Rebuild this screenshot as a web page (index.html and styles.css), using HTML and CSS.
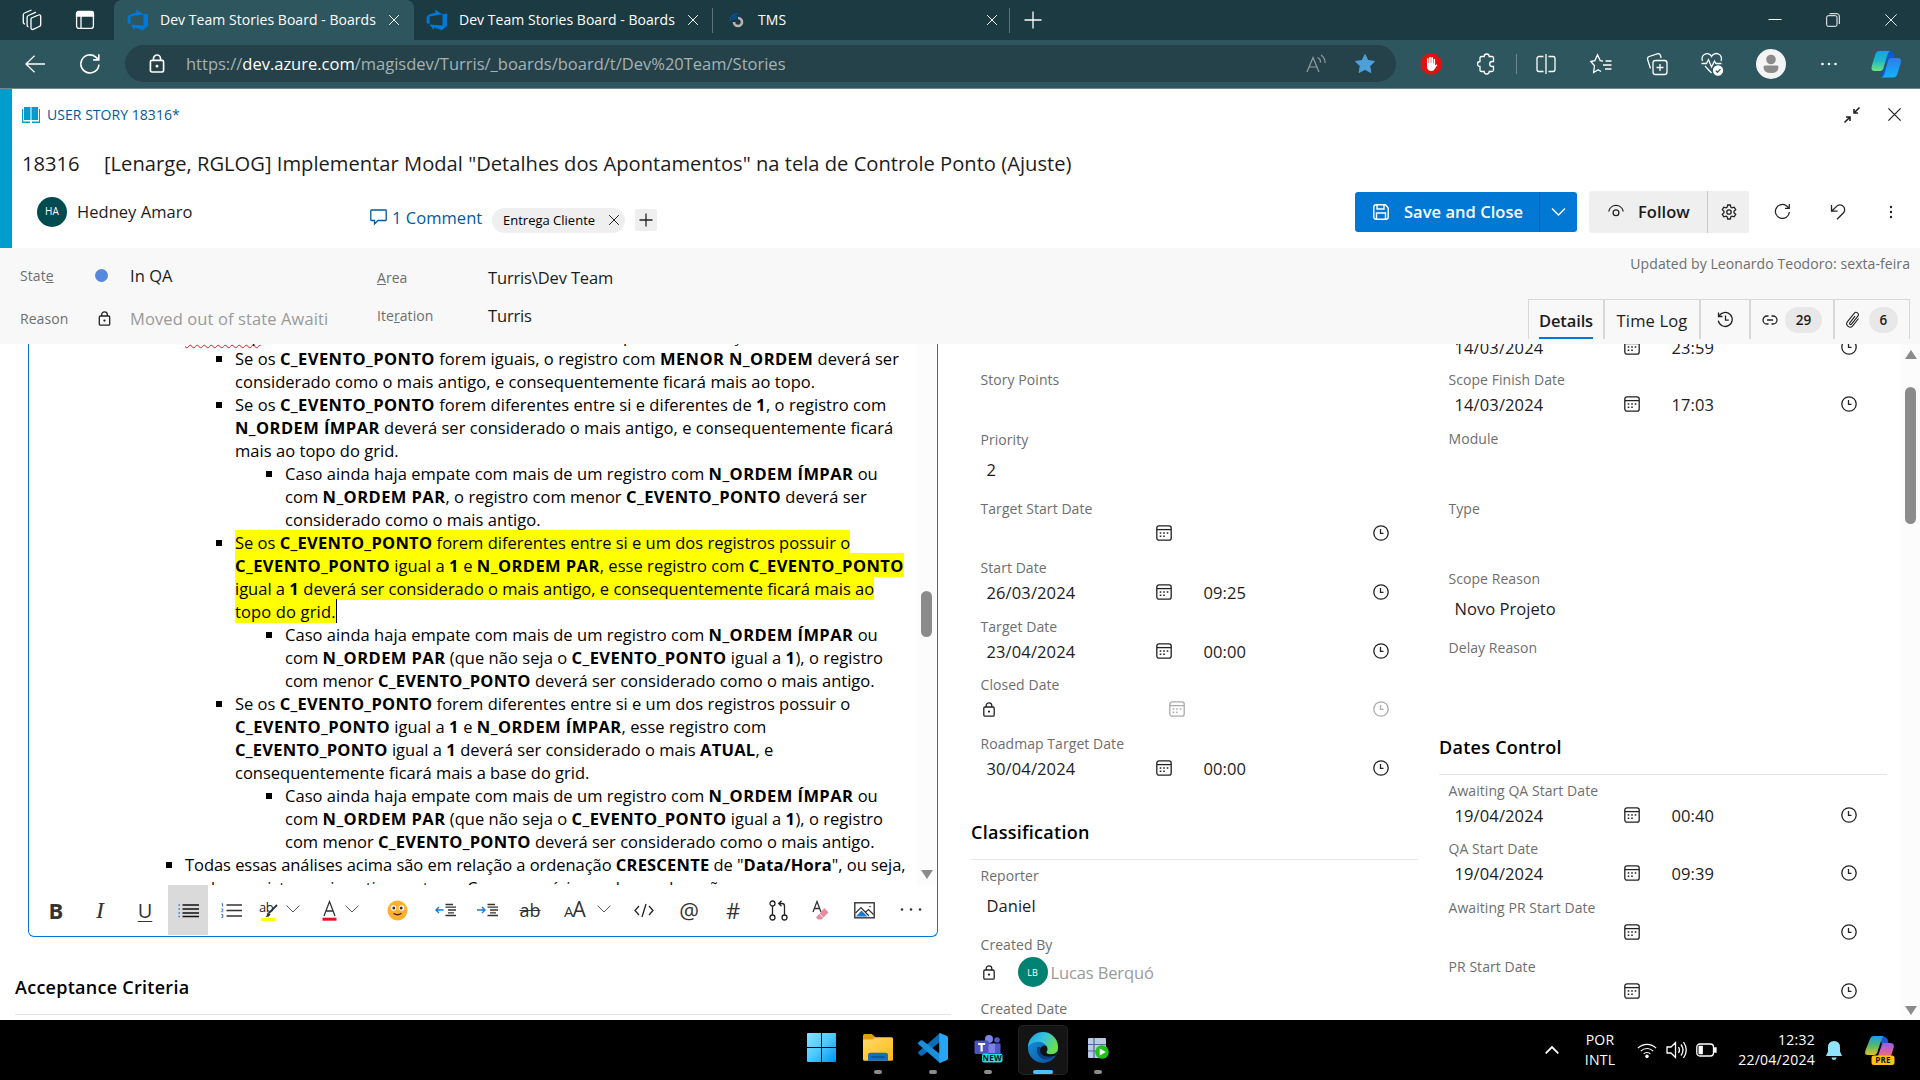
FILE: index.html
```html
<!DOCTYPE html>
<html lang="pt-BR">
<head>
<meta charset="utf-8">
<title>Dev Team Stories Board - Boards</title>
<link rel="stylesheet" href="styles.css">
</head>
<body>
<svg class="defs" aria-hidden="true">
  <defs>
    <linearGradient id="gWin" x1="0" y1="0" x2="1" y2="1"><stop offset="0" stop-color="#8be0ff"/><stop offset=".5" stop-color="#4cc9fb"/><stop offset="1" stop-color="#0092f5"/></linearGradient>
    <linearGradient id="gFolder" x1="0" y1="0" x2="1" y2="1"><stop offset="0" stop-color="#ffdc6b"/><stop offset="1" stop-color="#fdb813"/></linearGradient>
    <linearGradient id="gEdgeTop" x1="0" y1="0" x2="1" y2=".5"><stop offset="0" stop-color="#1c9fe0"/><stop offset=".5" stop-color="#35c1df"/><stop offset="1" stop-color="#6bdf4c"/></linearGradient>
    <linearGradient id="gEdgeBot" x1="0" y1="0" x2="1" y2="1"><stop offset="0" stop-color="#1597e2"/><stop offset="1" stop-color="#0c4a94"/></linearGradient>
    <linearGradient id="gCopA" x1="0" y1="0" x2="0" y2="1"><stop offset="0" stop-color="#0fa5e8"/><stop offset=".5" stop-color="#22b8c4"/><stop offset="1" stop-color="#6fe57c"/></linearGradient>
    <linearGradient id="gCopB" x1="0" y1="0" x2="0" y2="1"><stop offset="0" stop-color="#2f7be8"/><stop offset="1" stop-color="#10b4ff"/></linearGradient>
    <linearGradient id="gPreA" x1="0" y1="0" x2="0" y2="1"><stop offset="0" stop-color="#1e9bf0"/><stop offset=".5" stop-color="#52b96f"/><stop offset="1" stop-color="#e6c11e"/></linearGradient>
    <linearGradient id="gPreB" x1="0" y1="0" x2="0" y2="1"><stop offset="0" stop-color="#9a5cf0"/><stop offset="1" stop-color="#f5677c"/></linearGradient>
    <symbol id="close" viewBox="0 0 16 16"><path d="M1.5 1.5l13 13M14.5 1.5l-13 13"/></symbol>
    <symbol id="azure" viewBox="0 0 22 22"><path fill="#0078d7" d="M21 4.5v12.6l-5.1 4.2-8-2.9v2.9l-4.5-5.9 13.1 1V5.2zM16.6 5.2L9.2 .8v2.9L2.4 5.7.7 8v6l2.9 1.3V7.5z"/></symbol>
    <symbol id="cal" viewBox="0 0 16 16"><rect x=".8" y=".8" width="14.4" height="14.4" rx="2.2"/><path d="M1 4.6h14"/><path stroke-width="1.6" d="M3.700 8h1.600M7.200 8h1.600M10.700 8h1.600M3.700 11.200h1.600M7.200 11.200h1.600"/></symbol>
    <symbol id="clock" viewBox="0 0 16 16"><circle cx="8" cy="8" r="7.2"/><path d="M7.5 4v4.4h3"/></symbol>
    <symbol id="lock" viewBox="0 0 12 15"><rect x=".8" y="5" width="10.4" height="9.2" rx="1.2"/><path d="M3.2 5V3.6a2.8 2.8 0 0 1 5.6 0V5"/><circle cx="6" cy="9.6" r=".5"/></symbol>
    <symbol id="chev" viewBox="0 0 14 8"><path d="M.5 .6L7 7 13.5 .6"/></symbol>
    <symbol id="refresh" viewBox="0 0 18 18"><path d="M16.3 9.5A7.4 7.4 0 1 1 13.8 3.4L16 5.4M16.2 1v4.6h-4.6"/></symbol>
  </defs>
</svg>

<header class="browser">
  <div class="tabstrip">
    <div class="corner">
      <svg class="ln" width="22" height="22" viewBox="0 0 22 22"><path d="M10.500 9l7-3a1.500 1.500 0 0 1 2.200 1.500v8a2 2 0 0 1-1.500 2l-6 2.800a1.500 1.500 0 0 1-2.200-1.500V10.500q0-1 .5-1.500z"/><path d="M7.500 17.800a1.500 1.500 0 0 1-1.400-1.500V8.500a2 2 0 0 1 1.300-2l7.600-3.300M4 14.800a1.500 1.500 0 0 1-1.700-1.500V6a2 2 0 0 1 1.300-2L10.500 1"/></svg>
      <svg class="ln" width="20" height="20" viewBox="0 0 20 20"><rect x="1.600" y="1.600" width="16.800" height="16.800" rx="2.500"/><path fill="#fff" d="M1.500 6V3.500a2 2 0 0 1 2-2h13a2 2 0 0 1 2 2V6z"/><path d="M6 6v12"/></svg>
    </div>
    <div class="tab active"><svg width="22" height="22"><use href="#azure"/></svg><span>Dev Team Stories Board - Boards</span><svg class="ln x" width="12" height="12"><use href="#close"/></svg></div>
    <div class="tab"><svg width="22" height="22"><use href="#azure"/></svg><span>Dev Team Stories Board - Boards</span><svg class="ln x" width="12" height="12"><use href="#close"/></svg></div>
    <div class="tab tms"><svg width="14" height="14" viewBox="0 0 14 14"><path d="M1 8A7 7 0 0 1 8 1M4 7a4 4 0 0 1 4-3" fill="none" stroke="#0d4f94" stroke-width="1.800"/><path d="M5 9a4 4 0 1 0 4-4" fill="none" stroke="#b9b4b4" stroke-width="2.600"/></svg><span>TMS</span><svg class="ln x" width="12" height="12"><use href="#close"/></svg></div>
    <svg class="ln newtab" width="18" height="18" viewBox="0 0 18 18"><path d="M9 .5v17M.5 9h17"/></svg>
    <div class="winctl">
      <svg class="ln" width="14" height="14" viewBox="0 0 14 14"><path d="M.5 6.500h13"/></svg>
      <svg class="ln" width="14" height="14" viewBox="0 0 14 14"><rect x=".7" y="2.700" width="10.300" height="10.600" rx="1.500"/><path d="M3.500 .7H11a2.300 2.300 0 0 1 2.300 2.300v8"/></svg>
      <svg class="ln" width="14" height="14"><use href="#close"/></svg>
    </div>
  </div>
  <div class="navbar">
    <svg class="ln back" width="20" height="18" viewBox="0 0 20 18"><path d="M9.500 .7L1 9l8.500 8.300M1 9h19"/></svg>
    <svg class="ln" width="22" height="22"><use href="#refresh"/></svg>
    <div class="address">
      <svg class="ln" width="16" height="19"><use href="#lock"/></svg>
      <span class="url">https://<b>dev.azure.com</b>/magisdev/Turris/_boards/board/t/Dev%20Team/Stories</span>
      <svg class="aloud" width="20" height="20" viewBox="0 0 20 20"><path d="M1 18L7 3.500 13 18M3.200 13h7.600M11.500 3.500a5 5 0 0 1 3 5M15 1a9 9 0 0 1 4 8"/></svg>
      <svg width="22" height="22" viewBox="0 0 22 22"><path fill="#4f9fd8" stroke="#4f9fd8" stroke-linejoin="round" d="M11 1.500l2.900 6 6.600.9-4.800 4.600 1.200 6.500L11 16.400l-5.900 3.100 1.200-6.500L1.500 8.400l6.600-.9z"/></svg>
    </div>
    <div class="exts">
      <svg width="22" height="22" viewBox="0 0 22 22"><path fill="#e2100f" d="M6.500.8h9l5.700 5.700v9l-5.700 5.700h-9L.8 15.500v-9z"/><path fill="#fff" d="M7 8V5.500q1-.8 1.600 0V10h.5V4.300q.9-.9 1.700 0V10h.5V4.500q.9-.8 1.700 0V10.500h.5V6.200q.9-.7 1.600 0v6q1.400-1.300 2.300-.3-1.700 2.200-2.600 4.200-1 1.900-3.500 1.900-4 0-4.300-4z"/></svg>
      <svg class="ln" width="22" height="24" viewBox="0 0 22 24"><path d="M6.500 4.500h2.700a2.500 2.500 0 0 1 5 0H17q1.500 0 1.500 1.500v3.500h-1.300a2.500 2.500 0 0 0 0 5h1.300V18q0 1.500-1.500 1.500h-2.800a2.500 2.500 0 0 1-5 0H6.500Q5 19.500 5 18v-3.500a2.500 2.500 0 0 1 0-5V6q0-1.500 1.500-1.500z"/></svg>
      <i class="sep"></i>
      <svg class="ln" width="22" height="22" viewBox="0 0 22 22"><path d="M8.500 3.500H4a2 2 0 0 0-2 2v11a2 2 0 0 0 2 2h4.500M13.500 3.500H18a2 2 0 0 1 2 2v11a2 2 0 0 1-2 2h-4.500M11 1v20"/></svg>
      <svg class="ln" width="22" height="22" viewBox="0 0 22 22"><path d="M13 8l-2.800-.4L7.500 1.800 4.900 7.600.8 8.500l3.700 4.200-.9 6.800 4.600-2.800 2.800 1.800M15.500 8h6M13 12h8.500M15 16h6.500"/></svg>
      <svg class="ln" width="22" height="24" viewBox="0 0 22 24"><rect x="7" y="8.500" width="14" height="14" rx="2.500"/><path d="M14 12v7M10.500 15.500h7M4.500 16.500L1.600 7.500A2.500 2.500 0 0 1 3.200 4.500l8-2.700a2.500 2.500 0 0 1 3.200 1.600l.8 2.600"/></svg>
      <svg class="ln" width="22" height="24" viewBox="0 0 22 24"><path d="M1.500 9a5 5 0 0 1 9-4.500A5 5 0 0 1 20 9M4 14l6.500 7M.5 11.500h5l2-4 3 7.500 3-6 1.500 2.500h5.500"/><circle cx="17" cy="18.500" r="4.500" fill="#fff"/><path d="M14.700 18.600l1.700 1.700 3-3.200" stroke="#2d565f"/></svg>
      <svg width="30" height="30" viewBox="0 0 30 30"><circle cx="15" cy="15" r="15" fill="#f4f4f4"/><circle cx="15" cy="10.500" r="4.800" fill="#8b8b8b"/><path fill="#8b8b8b" d="M9 16.500h12q1.500 0 1.500 1.500 0 6-7.500 6t-7.500-6q0-1.500 1.500-1.500z"/></svg>
      <svg width="18" height="6" viewBox="0 0 18 6"><g fill="#fff"><circle cx="2.500" cy="3" r="1.300"/><circle cx="9" cy="3" r="1.300"/><circle cx="15.500" cy="3" r="1.300"/></g></svg>
      <svg class="copilot" width="30" height="28" viewBox="0 0 30 28"><path fill="#0d5ad0" d="M14 1h5q3 0 4 4l1 4h-7L10 26q4 1 5-1z"/><path fill="url(#gCopA)" d="M8 1h11q-2 1-3 5l-3.500 12q-.8 3-3.500 3H3.500Q-.5 21 .8 16L4.500 4Q5.500 1 8 1z"/><path fill="url(#gCopB)" d="M20 8h6.500q4.500 0 3.200 5l-3.300 11q-1.200 3.500-4.400 3.500H9q3.500 0 4.600-4l3-11.500Q17.500 8 20 8z"/></svg>
    </div>
  </div>
</header>

<main class="page">
  <section class="head">
    <div class="crumb">
      <svg width="18" height="16" viewBox="0 0 18 16"><path fill="#009ccc" d="M2 0h6.500v13H2zM9.500 0H16v13H9.500zM0 2h1v12.500h7V16H0zM17 2h1v14h-8v-1.500h7z"/></svg>
      <span>USER STORY 18316*</span>
      <svg class="ink shrink" width="16" height="16" viewBox="0 0 16 16"><path d="M15.500.5L10 6M10 2v4h4M.5 15.500L6 10M2 10h4v4" stroke-width="1.600"/></svg>
      <svg class="ink" width="15" height="15"><use href="#close"/></svg>
    </div>
    <div class="title"><span>18316</span><span>[Lenarge, RGLOG] Implementar Modal "Detalhes dos Apontamentos" na tela de Controle Ponto (Ajuste)</span></div>
    <div class="actions">
      <span class="avatar ha">HA</span><span class="owner">Hedney Amaro</span>
      <svg class="comment" width="17" height="16" viewBox="0 0 17 16"><path d="M1.500 1h14a.7.7 0 0 1 .7.7v9.100a.7.7 0 0 1-.7.7H8L4.500 15v-3.500h-3a.7.7 0 0 1-.7-.7V1.700A.7.7 0 0 1 1.500 1z"/></svg>
      <span class="clink">1 Comment</span>
      <span class="tag">Entrega Cliente<svg class="ink" width="12" height="12"><use href="#close"/></svg></span>
      <span class="addtag"><svg class="ink" width="14" height="14" viewBox="0 0 14 14"><path d="M7 .5v13M.5 7h13"/></svg></span>
      <div class="btn primary">
        <svg class="wh" width="16" height="16" viewBox="0 0 16 16"><path d="M.8 3A2.200 2.200 0 0 1 3 .8h9.500L15.200 4v9A2.200 2.200 0 0 1 13 15.200H3A2.200 2.200 0 0 1 .8 13zM4 1v4h7V1M3.500 15V9h9v6"/></svg>
        <span>Save and Close</span>
        <i><svg class="wh" width="15" height="8"><use href="#chev"/></svg></i>
      </div>
      <div class="btn follow">
        <svg class="ink" width="16" height="11" viewBox="0 0 16 11"><path d="M.8 5.500a7.300 7.300 0 0 1 14.400 0"/><circle cx="8" cy="6.800" r="2.900"/></svg>
        <span>Follow</span>
        <i><svg class="ink" width="16" height="16" viewBox="0 0 16 16"><path d="M6.700 1h2.600l.5 2.200 1.200.7 2.200-.7 1.500 2.500-1.700 1.600v1.400l1.700 1.600-1.500 2.500-2.200-.7-1.200.7-.5 2.200H6.700l-.5-2.200-1.200-.7-2.200.7-1.500-2.500L3 8.700V7.300L1.300 5.700l1.500-2.500 2.200.7 1.200-.7z"/><circle cx="8" cy="8" r="2.200"/></svg></i>
      </div>
      <svg class="ink reload" width="17" height="17"><use href="#refresh"/></svg>
      <svg class="ink undo" width="16" height="16" viewBox="0 0 16 16"><path d="M1.500 1v6.200h6M1.800 7l4.800-4.600a4.700 4.700 0 0 1 6.700 6.600L7 15.200"/></svg>
      <svg class="more" width="4" height="14" viewBox="0 0 4 14"><g fill="#222"><circle cx="2" cy="2" r="1.200"/><circle cx="2" cy="7" r="1.200"/><circle cx="2" cy="12" r="1.200"/></g></svg>
    </div>
  </section>

  <section class="meta">
    <div class="mcol one">
      <div class="mrow"><label>Stat<u>e</u></label><i class="dot"></i><span>In QA</span></div>
      <div class="mrow"><label>Reason</label><svg class="ink" width="13" height="15"><use href="#lock"/></svg><span class="dim">Moved out of state Awaiti</span></div>
    </div>
    <div class="mcol two">
      <div class="mrow"><label><u>A</u>rea</label><span>Turris\Dev Team</span></div>
      <div class="mrow"><label>Ite<u>r</u>ation</label><span>Turris</span></div>
    </div>
    <div class="mcol three">
      <div class="updated">Updated by Leonardo Teodoro: sexta-feira</div>
      <div class="ptabs">
        <div class="pt1"><b>Details</b></div>
        <div class="pt2">Time Log</div>
        <div class="pt3"><svg class="ink" width="17" height="17" viewBox="0 0 17 17"><path d="M1.500 1.500v4h4M2 5.200a7 7 0 1 1-.7 4.500M8.500 4.500v4.700h3.300"/></svg></div>
        <div class="pt4"><svg class="ink" width="16" height="10" viewBox="0 0 16 10"><path d="M6.500 1H5a4 4 0 0 0 0 8h1.500M9.500 1H11a4 4 0 0 1 0 8H9.500M5 5h6"/></svg><em>29</em></div>
        <div class="pt5"><svg class="ink clip" width="15" height="17" viewBox="0 0 15 17"><path d="M12.500 7.500l-5.800 7.300a3.300 3.300 0 0 1-5.200-4.100l6.700-8.400a2.300 2.300 0 0 1 3.700 2.900l-6.400 8a1.100 1.100 0 0 1-1.700-1.400l5.300-6.700"/></svg><em>6</em></div>
      </div>
    </div>
  </section>

  <section class="body">
    <div class="left">
      <div class="editor">
        <div class="doc">
          <div class="text">
            <ul class="l1">
              <li class="nob"><span class="sq">timestamp</span><span class="d1">p</span><span class="d2">ç</span>
                <ul>
                  <li>Se os <b>C_EVENTO_PONTO</b> forem iguais, o registro com <b>MENOR N_ORDEM</b> deverá ser<br>considerado como o mais antigo, e consequentemente ficará mais ao topo.</li>
                  <li>Se os <b>C_EVENTO_PONTO</b> forem diferentes entre si e diferentes de <b>1</b>, o registro com<br><b>N_ORDEM ÍMPAR</b> deverá ser considerado o mais antigo, e consequentemente ficará<br>mais ao topo do grid.
                    <ul><li>Caso ainda haja empate com mais de um registro com <b>N_ORDEM ÍMPAR</b> ou<br>com <b>N_ORDEM PAR</b>, o registro com menor <b>C_EVENTO_PONTO</b> deverá ser<br>considerado como o mais antigo.</li></ul></li>
                  <li><mark class="tight">Se os <b>C_EVENTO_PONTO</b> forem diferentes entre si e um dos registros possuir o</mark><br><mark><b>C_EVENTO_PONTO</b> igual a <b>1</b> e <b>N_ORDEM PAR</b>, esse registro com <b>C_EVENTO_PONTO</b></mark><br><mark class="tight">igual a <b>1</b> deverá ser considerado o mais antigo, e consequentemente ficará mais ao</mark><br><mark class="caret">topo do grid.</mark>
                    <ul><li>Caso ainda haja empate com mais de um registro com <b>N_ORDEM ÍMPAR</b> ou<br>com <b>N_ORDEM PAR</b> (que não seja o <b>C_EVENTO_PONTO</b> igual a <b>1</b>), o registro<br><span class="tight">com menor <b>C_EVENTO_PONTO</b> deverá ser considerado como o mais antigo.</span></li></ul></li>
                  <li><span class="tight">Se os <b>C_EVENTO_PONTO</b> forem diferentes entre si e um dos registros possuir o</span><br><b>C_EVENTO_PONTO</b> igual a <b>1</b> e <b>N_ORDEM ÍMPAR</b>, esse registro com<br><span class="tight"><b>C_EVENTO_PONTO</b> igual a <b>1</b> deverá ser considerado o mais <b>ATUAL</b>, e<br>consequentemente ficará mais a base do grid.</span>
                    <ul><li>Caso ainda haja empate com mais de um registro com <b>N_ORDEM ÍMPAR</b> ou<br>com <b>N_ORDEM PAR</b> (que não seja o <b>C_EVENTO_PONTO</b> igual a <b>1</b>), o registro<br><span class="tight">com menor <b>C_EVENTO_PONTO</b> deverá ser considerado como o mais antigo.</span></li></ul></li>
                </ul></li>
              <li class="last">Todas essas análises acima são em relação a ordenação <b>CRESCENTE</b> de "<b>Data/Hora</b>", ou seja,<br>onde o registro mais antigo no topo. Caso o usuário mude a ordenação</li>
            </ul>
          </div>
          <div class="track inner"><i class="thumb"></i><i class="down"></i></div>
        </div>
        <div class="tools">
          <span class="tB">B</span>
          <span class="tI">I</span>
          <span class="tU">U</span>
          <span class="on"><svg width="21" height="15" viewBox="0 0 21 15"><path stroke="#111" stroke-width="1.400" d="M4.500 2H21M4.500 6H21M4.500 10H21M4.500 13.500H21"/><path stroke="#2f7fd6" stroke-width="1.400" d="M.5 2H2M.5 6H2M.5 10H2M.5 13.500H2"/></svg></span>
          <span><svg width="21" height="15" viewBox="0 0 21 15"><path stroke="#333" stroke-width="1.300" d="M5.500 2H21M5.500 7.500H21M5.500 13H21"/><path stroke="#2f7fd6" fill="none" d="M.5 1l1-.5v3M.3 6h1.500v1.300L.5 8.800H2.200M.3 11.500h1.500v3H.3M.8 13h1"/></svg></span>
          <span class="g"><svg width="18" height="21" viewBox="0 0 18 21"><text x="-1" y="11.500" class="sab">ab</text><path stroke="#333" stroke-width="1.800" d="M17 5l-8 8"/><path fill="#333" d="M8 12l2.500 2.500q-1.500 3-5 2.500 1.500-1 1.500-3z"/><path fill="#ff0" d="M1 18h14v3H1z"/></svg><svg class="ink thin" width="14" height="8"><use href="#chev"/></svg></span>
          <span class="g"><svg width="15" height="21" viewBox="0 0 15 21"><path fill="none" stroke="#333" stroke-width="1.300" d="M2 16L7.500 1.500 13 16M4 11h7"/><path fill="#e81123" d="M.5 17.700h14v3H.5z"/></svg><svg class="ink thin" width="14" height="8"><use href="#chev"/></svg></span>
          <span><svg width="21" height="21" viewBox="0 0 21 21"><circle cx="10.500" cy="10.500" r="10" fill="#ffb02e"/><circle cx="6.500" cy="8" r="2.800" fill="#fff"/><circle cx="14.500" cy="8" r="2.800" fill="#fff"/><circle cx="6.800" cy="8" r="1.500" fill="#402a32"/><circle cx="14.200" cy="8" r="1.500" fill="#402a32"/><path d="M6.500 13.300q4 3 8 0" fill="none" stroke="#402a32" stroke-width="1.400"/></svg></span>
          <span><svg width="21" height="14" viewBox="0 0 21 14"><path fill="none" stroke="#1a7ad4" stroke-width="1.400" d="M8.500 7H1M4 4L1 7l3 3"/><path stroke="#333" stroke-width="1.300" d="M10.500 1.500H18M10.500 4.200H21M13 7h8M13 9.800h6M10.500 12.500H21"/></svg></span>
          <span><svg width="21" height="14" viewBox="0 0 21 14"><path fill="none" stroke="#1a7ad4" stroke-width="1.400" d="M0 7h8M5 4l3 3-3 3"/><path stroke="#333" stroke-width="1.300" d="M10.500 1.500H18M10.500 4.200H21M13 7h8M13 9.800h6M10.500 12.500H21"/></svg></span>
          <span class="tS">ab</span>
          <span class="g g3"><span class="tAA"><small>A</small>A</span><svg class="ink thin" width="14" height="8"><use href="#chev"/></svg></span>
          <span><svg class="ink" width="20" height="15" viewBox="0 0 20 15"><path d="M5 3L1 7.500 5 12M15 3l4 4.500-4 4.500M12 1L8 14"/></svg></span>
          <span class="tAt">@</span>
          <span class="tH">#</span>
          <span><svg class="ink" width="19" height="21" viewBox="0 0 19 21"><circle cx="3.500" cy="3.500" r="2.500"/><circle cx="3.500" cy="17.500" r="2.500"/><circle cx="15.500" cy="17.500" r="2.500"/><path d="M3.500 6v9M15.500 15V6q0-2.500-2.500-2.500H10M12.500 .8L9.700 3.500l2.800 2.800"/></svg></span>
          <span><svg width="17" height="20" viewBox="0 0 17 20"><path fill="none" stroke="#333" stroke-width="1.300" d="M1 12L5 1.500 9 12M2.500 8.500h5"/><path fill="#e98aa0" d="M12.500 8l4 4.500-7 7H6l-2-2z"/><path stroke="#fff" d="M7 13l4 4.500"/></svg></span>
          <span><svg width="21" height="17" viewBox="0 0 21 17"><rect x=".8" y=".8" width="19.400" height="15" fill="#fff" stroke="#333" stroke-width="1.400"/><path fill="#1a7ad4" d="M2 14.500L7.500 8.500l6 6z"/><path fill="none" stroke="#333" stroke-width="1.200" d="M1.500 11L7 5.500l8 8.500M11.500 10l3-2.500 5 5"/><circle cx="16" cy="4.500" r=".8" fill="#333"/></svg></span>
          <span><svg width="22" height="4" viewBox="0 0 22 4"><g fill="#333"><circle cx="2" cy="1.500" r="1.300"/><circle cx="11" cy="1.500" r="1.300"/><circle cx="20" cy="1.500" r="1.300"/></g></svg></span>
        </div>
      </div>
      <h2 class="acc">Acceptance Criteria</h2>
    </div>

    <div class="fields mid">
      <div class="f h60"><label>Story Points</label></div>
      <div class="f h69"><label>Priority</label><p class="combo">2</p></div>
      <div class="f"><label>Target Start Date</label><p><svg class="cal"><use href="#cal"/></svg><svg class="clk"><use href="#clock"/></svg></p></div>
      <div class="f"><label>Start Date</label><p><span>26/03/2024</span><svg class="cal"><use href="#cal"/></svg><span>09:25</span><svg class="clk"><use href="#clock"/></svg></p></div>
      <div class="f h58"><label>Target Date</label><p><span>23/04/2024</span><svg class="cal"><use href="#cal"/></svg><span>00:00</span><svg class="clk"><use href="#clock"/></svg></p></div>
      <div class="f locked"><label>Closed Date</label><p><svg class="ink lk"><use href="#lock"/></svg><svg class="cal"><use href="#cal"/></svg><svg class="clk"><use href="#clock"/></svg></p></div>
      <div class="f"><label>Roadmap Target Date</label><p><span>30/04/2024</span><svg class="cal"><use href="#cal"/></svg><span>00:00</span><svg class="clk"><use href="#clock"/></svg></p></div>
      <h2>Classification</h2>
      <div class="f h69"><label>Reporter</label><p class="combo">Daniel</p></div>
      <div class="f h64"><label>Created By</label><p class="who"><svg class="ink lk"><use href="#lock"/></svg><i class="avatar lb">LB</i>Lucas Berquó</p></div>
      <div class="f"><label>Created Date</label></div>
    </div>

    <div class="fields right">
      <div class="f cut"><p><span>14/03/2024</span><svg class="cal"><use href="#cal"/></svg><span>23:59</span><svg class="clk"><use href="#clock"/></svg></p></div>
      <div class="f"><label>Scope Finish Date</label><p><span>14/03/2024</span><svg class="cal"><use href="#cal"/></svg><span>17:03</span><svg class="clk"><use href="#clock"/></svg></p></div>
      <div class="f h70"><label>Module</label></div>
      <div class="f h70"><label>Type</label></div>
      <div class="f h69"><label>Scope Reason</label><p class="combo">Novo Projeto</p></div>
      <div class="f h69"><label>Delay Reason</label></div>
      <h2>Dates Control</h2>
      <div class="f h58"><label>Awaiting QA Start Date</label><p><span>19/04/2024</span><svg class="cal"><use href="#cal"/></svg><span>00:40</span><svg class="clk"><use href="#clock"/></svg></p></div>
      <div class="f"><label>QA Start Date</label><p><span>19/04/2024</span><svg class="cal"><use href="#cal"/></svg><span>09:39</span><svg class="clk"><use href="#clock"/></svg></p></div>
      <div class="f"><label>Awaiting PR Start Date</label><p><svg class="cal"><use href="#cal"/></svg><svg class="clk"><use href="#clock"/></svg></p></div>
      <div class="f"><label>PR Start Date</label><p><svg class="cal"><use href="#cal"/></svg><svg class="clk"><use href="#clock"/></svg></p></div>
    </div>
    <div class="track outer"><i class="up"></i><i class="thumb"></i><i class="down"></i></div>
  </section>
</main>

<footer class="taskbar">
  <div class="apps">
    <div class="app idle"><svg width="29" height="29" viewBox="0 0 29 29"><path fill="url(#gWin)" d="M0 1q0-1 1-1h13v14H0zM15 0h13q1 0 1 1v13H15zM0 15h14v14H1q-1 0-1-1zM15 15h14v13q0 1-1 1H15z"/></svg></div>
    <div class="app"><svg width="30" height="27" viewBox="0 0 30 27"><path fill="#e0a108" d="M0 1.500Q0 0 1.500 0h7.300l4 3.500V8H0z"/><path fill="url(#gFolder)" d="M0 5.500h9.500l3-2.200H28.500Q30 3.300 30 4.800v20.500q0 1.500-1.500 1.500h-27Q0 26.800 0 25.300z"/><path fill="#0f6fc2" d="M5 26.800V21q0-2.300 2.300-2.300h15.400Q25 18.700 25 21v5.800z"/><path stroke="#0a4a8a" stroke-width="1.400" d="M8.500 23h13"/></svg></div>
    <div class="app"><svg width="30" height="30" viewBox="0 0 30 30"><path fill="#0a6cb8" d="M22 0v9L4.500 22.500q-1 .6-2 0L.5 20.700q-.9-1 0-2z"/><path fill="#1a8fdc" d="M22 30v-9L4.500 7.500q-1-.6-2 0L.5 9.300q-.9 1 0 2z"/><path fill="#2aa5f2" d="M22 0l7 3q1 .6 1 1.800v20.400q0 1.200-1 1.800l-7 3q-.8 0-.8-1V1q0-1 .8-1z"/></svg></div>
    <div class="app"><svg width="30" height="30" viewBox="0 0 30 30"><circle cx="16" cy="6" r="4" fill="#7b83eb"/><circle cx="24" cy="7" r="2.800" fill="#5059c9"/><path fill="#5059c9" d="M20 10.500h7.500V20H20z"/><path fill="#7b83eb" d="M9 10.500h13V20H9z"/><rect x="1.500" y="7.500" width="14" height="13.500" rx="1.500" fill="#4b53bc"/><path fill="#fff" d="M5 10h7.200v2H9.700v6.500H7.500V12H5z"/><rect x="9" y="20.500" width="20.500" height="9" rx="2" fill="#1fe3dc"/><text x="19.200" y="28" class="new">NEW</text></svg></div>
    <div class="app current"><svg width="30" height="30" viewBox="0 0 30 30"><circle cx="15" cy="15" r="15" fill="url(#gEdgeBot)"/><path fill="url(#gEdgeTop)" d="M0 14A15 15 0 0 1 30 14q.3 7-6.500 7.500-5.500.3-5-2.300Q20.500 16 18.500 13 14 7 6 9.500 1.500 11 0 14z"/><path fill="#0b3f86" d="M9.500 14q-2 5 1.500 9t9 3.500q4-.7 7-4.500-6 3-10.500.5Q12 20 12.500 14z"/><path fill="#111" d="M12.300 15.500q2.200-4 6-2.500 2 2.500.3 5.600-1 2 2.700 2.600 4.500.8 8-2.200l-1.500 3.500q-4.500 1.500-8.500 1-5-.3-6.700-4-.8-2-.3-4z"/></svg></div>
    <div class="app"><svg width="24" height="24" viewBox="0 0 24 24"><rect x="2" y="2" width="18" height="20" rx="1" fill="#b9cbe6"/><path stroke="#52699a" stroke-width="1.200" d="M2 8.500h18M2 15h18M8 2v20"/><circle cx="16" cy="16" r="6.800" fill="#1ec41a"/><path fill="#fff" d="M13.700 12.500v7l6-3.500z"/></svg></div>
  </div>
  <div class="tray">
    <svg class="expand" width="14" height="8" viewBox="0 0 14 8"><path d="M.7 7.300L7 1l6.300 6.300"/></svg>
    <div class="lang">POR<br>INTL</div>
    <svg class="ln" width="20" height="16" viewBox="0 0 22 17"><path d="M1 6.500a14 14 0 0 1 20 0M4.200 9.700a9.600 9.600 0 0 1 13.600 0M7.300 12.800a5.200 5.200 0 0 1 7.400 0"/><circle cx="11" cy="15.500" r="1.300" fill="#fff"/></svg>
    <svg class="ln" width="21" height="18" viewBox="0 0 21 18"><path d="M1 6h4l4.500-4.500v15L5 12H1zM12.500 6q2 3 0 6M15 3.500q4 5.500 0 11M17.500 1q5.500 8 0 16"/></svg>
    <svg class="ln" width="21" height="14" viewBox="0 0 21 14"><rect x=".8" y="1" width="16.700" height="12" rx="3"/><path fill="#fff" d="M3.200 3.500h3v7h-3zM18.500 5h1.500v4h-1.500z"/></svg>
    <div class="time">12:32<br>22/04/2024</div>
    <svg class="bell" width="16" height="19" viewBox="0 0 16 19"><path fill="#8fe3fb" d="M8 0q6 0 6 6.500v4L16 15H0l2-4.500v-4Q2 0 8 0zM5.300 16.500h5.400Q10 19 8 19t-2.700-2.500z"/></svg>
    <svg width="30" height="29" viewBox="0 0 30 29"><path fill="#1b57d6" d="M15 1h4q3 0 4 4l.5 3h-7z"/><path fill="url(#gPreA)" d="M9 0h10q-2 1-3 5l-3 9q-1 5-4 5H3q-4 0-2.600-4.500L5 3Q6 0 9 0z"/><path fill="url(#gPreB)" d="M19 7h6q5 0 3.600 5L26 20H13l3-9q1-4 3-4z"/><rect x="6.500" y="19.500" width="23" height="9.500" rx="2.500" fill="#fdc112"/><text x="18" y="27.300" class="new">PRE</text></svg>
  </div>
</footer>
</body>
</html>
```
FILE: styles.css
```css
* { box-sizing: border-box; }
body {
  margin: 0; width: 1920px; height: 1080px; overflow: hidden;
  display: flex; flex-direction: column;
  font: 16.5px/23px "Open Sans", "Noto Sans", sans-serif;
  letter-spacing: .04px; color: #1c1c1c; background: #fff; white-space: nowrap;
}
svg { display: block; flex: none; overflow: visible; }
i, em { font-style: normal; }
p, h2, ul { margin: 0; padding: 0; }
.defs { position: absolute; width: 0; height: 0; }
.ln { fill: none; stroke: #fff; stroke-width: 1.3; }
.ink { fill: none; stroke: #222; stroke-width: 1.3; }
.wh { fill: none; stroke: #fff; stroke-width: 1.4; }
.thin { stroke-width: .9; stroke: #444; }

/* browser chrome */
.browser { flex: none; height: 89px; background: #2d565f; border-bottom: 1px solid #6c8a90; }
.tabstrip { display: flex; height: 40px; background: #1b3a42; color: #fff; font-size: 14px; align-items: center; }
.corner { width: 114px; height: 40px; display: flex; align-items: center; padding-left: 21px; gap: 32px; }
.tab { width: 298px; height: 40px; padding: 0 13px 0 12px; display: flex; align-items: center; }
.tab span { margin: -2px 0 0 11px; flex: 1; }
.tab.active { width: 300px; padding: 0 14px 0 13px; background: #2d565f; border-radius: 8px 8px 0 0; }
.tab.tms { height: 25px; padding: 0 11px 0 16px; border: solid #5d7378; border-width: 0 1px; }
.tab.tms span { margin-left: 15px; }
.newtab { margin-left: 14px; }
.winctl { margin-left: auto; padding-right: 22px; display: flex; gap: 44px; }
.winctl svg { stroke-width: 1; }
.navbar { display: flex; align-items: center; height: 47px; }
.back { margin: 0 34px 0 25px; }
.address { margin-left: 24px; width: 1271px; height: 37px; border-radius: 19px; background: #25424a; display: flex; align-items: center; padding: 0 20px 0 24px; color: #a5b2b5; }
.url { margin: -1px 0 0 21px; flex: 1; letter-spacing: 0; }
.url b { font-weight: 400; color: #fff; }
.aloud { fill: none; stroke: #8fa0a4; stroke-width: 1.2; margin-right: 28px; }
.exts { flex: 1; display: flex; align-items: center; justify-content: space-between; padding: 0 19px 0 24px; }
.exts .sep { width: 1px; height: 20px; background: #6c8a90; margin: 0 -15px; }

/* work item header */
.page { flex: none; height: 931px; display: flex; flex-direction: column; }
.head { flex: none; height: 159px; border-left: 12px solid #009ccc; }
.crumb { display: flex; align-items: center; height: 51px; padding: 0 18px 0 10px; font-size: 14px; color: #005a9e; }
.crumb span { margin-left: 7px; flex: 1; }
.shrink { margin-right: 27px; }
.title { display: flex; align-items: center; height: 46px; padding-left: 10px; font-size: 20.15px; letter-spacing: .01px; }
.title span:first-child { width: 82px; }
.actions { display: flex; align-items: center; height: 51px; padding: 0 27px 0 25px; }
.avatar { width: 30px; height: 30px; border-radius: 50%; color: #fff; font-size: 10px; display: flex; align-items: center; justify-content: center; }
.ha { background: #004b50; }
.owner { margin-left: 10px; width: 293px; }
.comment { fill: none; stroke: #005a9e; stroke-width: 1.3; margin-top: 11px; }
.clink { margin: 12px 10px 0 5px; color: #005a9e; width: 90px; }
.tag { width: 133px; height: 25px; margin-top: 17px; border-radius: 13px; background: #efefef; font-size: 13px; color: #000; display: flex; align-items: center; justify-content: space-between; padding: 0 5px 0 11px; letter-spacing: 0; }
.addtag { width: 22px; height: 22px; margin: 16px 0 0 10px; background: #efefef; border-radius: 2px; display: flex; align-items: center; justify-content: center; }
.btn { display: flex; align-items: center; height: 40px; border-radius: 3px; font-weight: 600; }
.btn i { display: flex; height: 100%; align-items: center; justify-content: center; }
.primary { margin-left: 698px; width: 222px; background: #0078d4; color: #fff; padding-left: 18px; }
.primary span { margin-left: 15px; width: 135px; }
.primary i { width: 38px; border-left: 1px solid #005a9e; }
.follow { margin-left: 12px; width: 160px; height: 42px; background: #efefef; padding-left: 19px; }
.follow span { margin-left: 14px; width: 69px; }
.follow i { width: 42px; border-left: 1px solid #c8c8c8; }
.reload { margin-left: 25px; }
.undo { margin-left: 39px; }
.more { margin-left: auto; }

/* state, area, tabs */
.meta { flex: none; height: 96px; background: #f8f8f8; display: flex; }
label { font-size: 14px; color: #6e6e6e; letter-spacing: .06px; }
.mrow { display: flex; align-items: center; }
.mrow .ink { margin-right: 19px; }
.one { width: 357px; padding: 6px 0 0 20px; }
.one .mrow { height: 43px; }
.one label { width: 78px; }
.dot { width: 13px; height: 13px; border-radius: 50%; background: #5688e0; margin: -1px 22px 0 -3px; }
.dim { color: #9a9a9a; letter-spacing: .11px; }
.two { padding: 10px 0 0 20px; flex: 1; }
.two .mrow { height: 38px; letter-spacing: -.15px; }
.two label { width: 111px; }
.three { padding-right: 10px; display: flex; flex-direction: column; align-items: flex-end; }
.updated { font-size: 14px; color: #6e6e6e; padding-top: 4px; height: 51px; letter-spacing: .07px; }
.ptabs { display: flex; width: 382px; height: 40px; border: solid #d8d8d8; border-width: 1px 1px 0; }
.ptabs div { display: flex; align-items: center; justify-content: center; border-right: 2px solid #d8d8d8; }
.ptabs .pt1 { width: 76px; }
.pt1 b { font-weight: 600; letter-spacing: -.13px; height: 39px; line-height: 42px; border-bottom: 2px solid #0078d4; }
.ptabs .pt2 { width: 96px; padding-top: 2px; letter-spacing: .15px; }
.ptabs .pt3 { width: 50px; }
.ptabs .pt4 { width: 84px; gap: 7px; }
.ptabs .pt5 { flex: 1; gap: 8px; border: 0; }
.clip { stroke-width: 1.1; }
.ptabs em { background: #e8e8e8; border-radius: 13px; height: 26px; padding: 0 11px; font-size: 13.500px; font-weight: 600; line-height: 27px; }

/* body columns */
.body { flex: 1; min-height: 0; display: flex; overflow: hidden; }
.left { width: 971px; padding-left: 15px; }
.editor { margin-left: 13px; width: 910px; height: 593px; border: 1px solid #0078d4; border-top: 0; border-radius: 0 0 6px 6px; }
.doc { height: 541px; display: flex; overflow: hidden; }
.text { width: 888px; flex: none; margin-top: -20px; color: #000; }
ul { list-style: none; }
.l1 { margin-left: 137px; }
li { padding-left: 19px; background: linear-gradient(#000, #000) no-repeat 0 9px / 6px 6px; }
.nob { background: none; }
li ul { margin-left: 31px; }
.text b { letter-spacing: .43px; }
.text .tight { letter-spacing: 0; }
.text .tight b { letter-spacing: .26px; }
.last { letter-spacing: -.05px; }
.text .last b { letter-spacing: .2px; }
mark { background: #ff0; color: #000; padding: 1px 0 0; }
.caret { border-right: 1px solid #000; letter-spacing: .15px; }
.sq { text-decoration: underline wavy #e81123 1px; text-underline-offset: 2px; text-decoration-skip-ink: none; letter-spacing: -.8px; display: inline-block; width: 438px; }
.d1 { display: inline-block; width: 109px; }
.track { background: #fcfcfc; display: flex; flex-direction: column; align-items: center; }
.track i { flex: none; }
.thumb { width: 11px; border-radius: 6px; background: #8b8b8b; }
.up, .down { border: solid transparent; border-width: 0 6px; }
.up { border-bottom: 9px solid #8b8b8b; }
.down { border-top: 9px solid #8b8b8b; }
.inner { width: 19px; }
.inner .thumb { margin-top: 247px; height: 46px; }
.inner .down { margin-top: 233px; }
.outer { width: 19px; padding-top: 6px; margin-left: auto; }
.outer .thumb { margin-top: 28px; height: 137px; }
.outer .down { margin-top: 482px; }

/* formatting toolbar */
.tools { height: 51px; display: grid; padding-left: 5px; color: #333; letter-spacing: 0; grid-template-columns: 44px 44px 46px 40px 46px 51px 70px 44px 52px 32px 54px 61px 52px 38px 50px 40px 44px 44px 50px; }
.tools > span { height: 50px; display: flex; align-items: center; justify-content: center; }
.tools .on { background: #dadada; }
.tools .g { gap: 8px; }
.tools .thin { margin-top: -2px; }
.tB { font-weight: 700; font-size: 22px; }
.tI { font: italic 24px "Liberation Serif", serif; }
.tU { font-size: 20px; text-decoration: underline; text-underline-offset: 3px; text-decoration-thickness: 1px; }
.tS { font-size: 18px; text-decoration: line-through; text-decoration-thickness: 1px; }
.tAA { font-size: 21px; letter-spacing: -1px; }
.tAA small { font-size: 15px; }
.tools .g3 { gap: 12px; }
.tAt { font-size: 22px; }
.tH { font-size: 22px; }
.sab { font-size: 13px; fill: #222; letter-spacing: -.5px; }
h2 { font-size: 18px; font-weight: 600; line-height: 24px; letter-spacing: .27px; color: #000; border-bottom: 1px solid #e6e6e6; }
.acc { margin-top: 38px; width: 936px; height: 40px; }

/* field columns */
.fields { width: 447px; padding-top: 26px; }
.right { margin-left: 21px; width: 448px; padding-top: 0; }
.f { height: 59px; padding-left: 9.500px; }
.f label { display: block; height: 22px; line-height: 20px; }
.f p { display: flex; align-items: center; height: 24px; padding-left: 6px; letter-spacing: .12px; }
.f .combo { height: 34px; letter-spacing: .04px; }
.f p span { width: 169px; }
.f p span ~ span { width: 169px; margin-left: 32px; }
.cal, .clk { width: 16px; height: 16px; fill: none; stroke: #222; stroke-width: 1.3; }
.cal:first-child { margin-left: 169px; }
.cal + .clk { margin-left: 201px; }
.lk { width: 12px; height: 15px; margin-left: -4px; }
.lk + .cal { margin-left: 174px; }
.locked .cal, .locked .clk { stroke: #aaa; }
.locked .cal + .clk { margin-left: 188px; }
.h58 { height: 58px; } .h60 { height: 60px; } .h64 { height: 64px; } .h69 { height: 69px; } .h70 { height: 70px; }
.mid h2 { margin: 27px 0 6px; height: 40px; }
.mid .who { color: #9a9a9a; height: 30px; letter-spacing: -.13px; }
.lb { background: #008272; margin: 0 3px 0 23px; font-size: 9px; }
.right .cut { height: 35px; margin-top: -9px; }
.right h2 { margin: 28px 0 6px; height: 40px; }

/* taskbar */
.taskbar { flex: none; height: 60px; background: #000; display: flex; align-items: center; color: #fff; }
.apps { display: flex; gap: 5px; margin-left: 798px; }
.app { width: 50px; height: 50px; border-radius: 5px; display: flex; flex-direction: column; align-items: center; justify-content: flex-end; padding-bottom: 1px; }
.app svg { margin: auto; }
.app::after { content: ""; width: 8px; height: 4px; border-radius: 2px; background: #8b8b8b; flex: none; }
.app.idle { padding-right: 3px; }
.app.idle::after { background: none; }
.current { background: #141414; border: 1px solid #222; padding-bottom: 0; }
.current::after { width: 20px; background: #4cc2ff; }
.new { font: 700 8px "Open Sans", sans-serif; text-anchor: middle; fill: #111; letter-spacing: .2px; }
.tray { margin-left: auto; padding-right: 25px; display: flex; align-items: center; font-size: 14px; line-height: 20px; letter-spacing: .25px; }
.expand { fill: none; stroke: #fff; stroke-width: 1.8; }
.lang { width: 32px; text-align: center; margin: 0 21px 0 25px; }
.tray .ln + .ln { margin-left: 9px; }
.time { text-align: right; width: 78px; margin: 0 11px 0 20px; }
.bell { margin-right: 23px; }
```
